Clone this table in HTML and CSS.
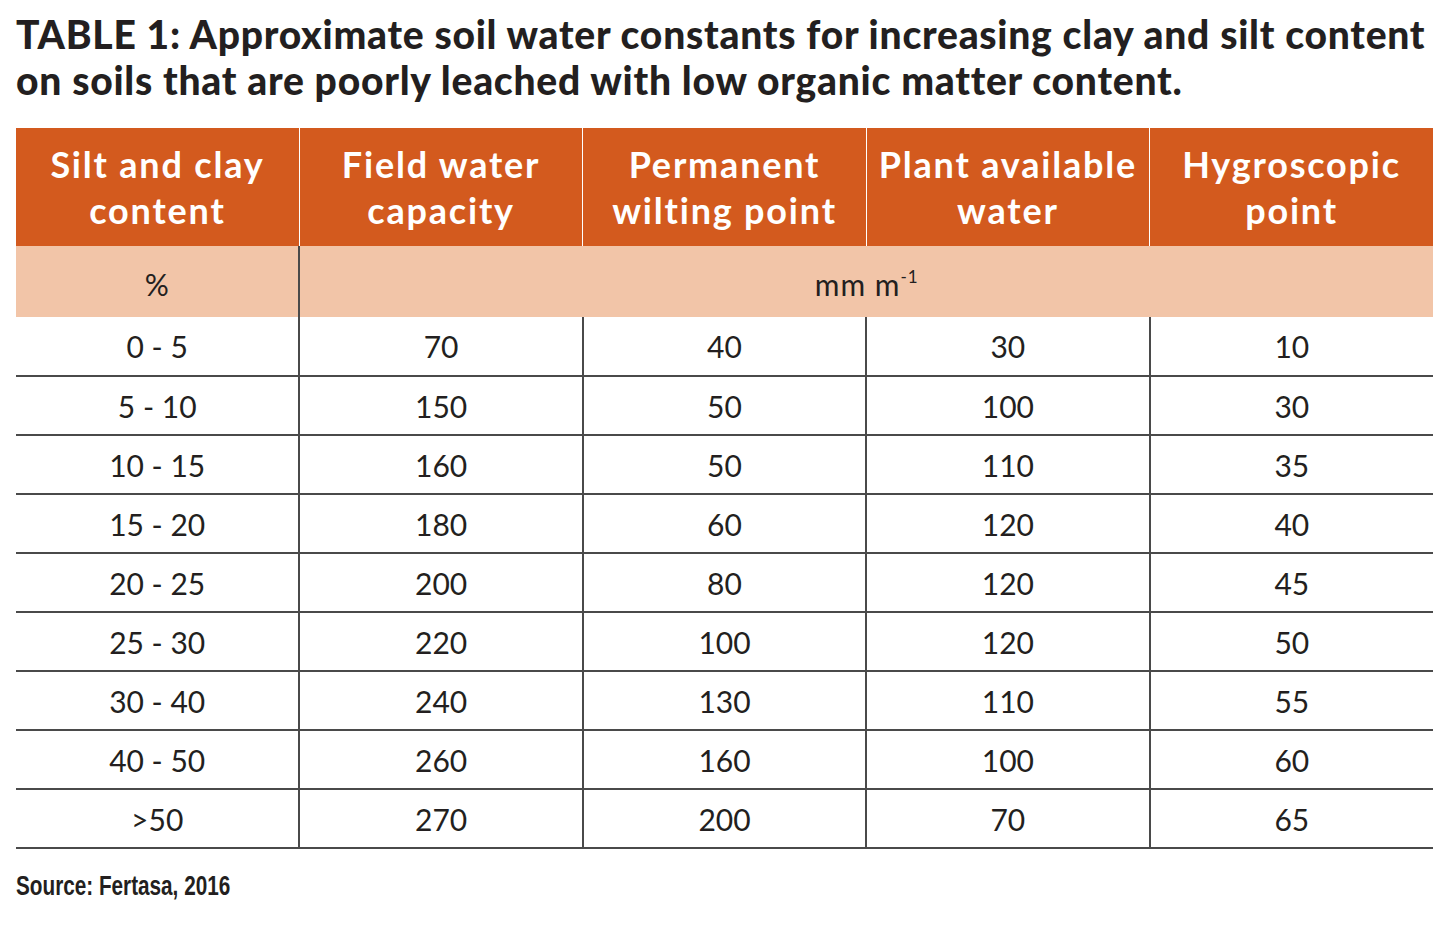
FILE: index.html
```html
<!DOCTYPE html>
<html lang="en">
<head>
<meta charset="utf-8">
<title>Table 1</title>
<link rel="stylesheet" href="styles.css">
</head>
<body>
<div class="page">
  <h1 class="title">TABLE 1: Approximate soil water constants for increasing clay and silt content<br>on soils that are poorly leached with low organic matter content.</h1>
  <table class="soil">
    <thead>
      <tr class="head">
        <th>Silt and clay<br>content</th>
        <th>Field water<br>capacity</th>
        <th>Permanent<br>wilting point</th>
        <th>Plant available<br>water</th>
        <th>Hygroscopic<br>point</th>
      </tr>
      <tr class="units">
        <td class="unit-first">%</td>
        <td colspan="4">mm m<sup>-1</sup></td>
      </tr>
    </thead>
    <tbody>
      <tr><td>0 - 5</td><td>70</td><td>40</td><td>30</td><td>10</td></tr>
      <tr><td>5 - 10</td><td>150</td><td>50</td><td>100</td><td>30</td></tr>
      <tr><td>10 - 15</td><td>160</td><td>50</td><td>110</td><td>35</td></tr>
      <tr><td>15 - 20</td><td>180</td><td>60</td><td>120</td><td>40</td></tr>
      <tr><td>20 - 25</td><td>200</td><td>80</td><td>120</td><td>45</td></tr>
      <tr><td>25 - 30</td><td>220</td><td>100</td><td>120</td><td>50</td></tr>
      <tr><td>30 - 40</td><td>240</td><td>130</td><td>110</td><td>55</td></tr>
      <tr><td>40 - 50</td><td>260</td><td>160</td><td>100</td><td>60</td></tr>
      <tr><td>&gt;50</td><td>270</td><td>200</td><td>70</td><td>65</td></tr>
    </tbody>
  </table>
  <p class="source"><span class="source-text">Source: Fertasa, 2016</span></p>
</div>
</body>
</html>
```

FILE: styles.css
```css
* { box-sizing: border-box; }
html, body { margin: 0; padding: 0; background: #ffffff; }
body { font-family: "Lato", "Open Sans", sans-serif; color: #231f20; }

.page { padding: 11px 22px 0 16px; }

.title {
  margin: 0;
  font-family: "Lato", sans-serif;
  font-weight: 900;
  font-size: 39px;
  line-height: 46px;
  letter-spacing: 0.75px;
  white-space: nowrap;
  color: #231f20;
}

.soil {
  margin-top: 25px;
  width: 1417px;
  border-collapse: collapse;
  table-layout: fixed;
}

.head th {
  background: #d35a1e;
  color: #ffffff;
  font-weight: 700;
  font-size: 36px;
  line-height: 46px;
  height: 118px;
  padding: 0;
  text-align: center;
  vertical-align: middle;
  border-left: 1px solid #ffffff;
  letter-spacing: 1.8px;
  white-space: nowrap;
}
.head th:first-child { border-left: none; }

.units td {
  background: #f2c5a8;
  height: 71px;
  font-size: 30px;
  text-align: center;
  vertical-align: middle;
  padding: 4px 0 0;
  letter-spacing: 1px;
}
.units .unit-first { border-right: 2px solid #4a4a4a; }
.units sup { font-size: 17px; vertical-align: 13px; line-height: 0; }

tbody td {
  height: 59px;
  font-size: 30px;
  text-align: center;
  vertical-align: middle;
  padding: 0;
  border-bottom: 2px solid #4a4a4a;
  border-left: 2px solid #4a4a4a;
}
tbody td:first-child { border-left: none; }

.source {
  margin: 21px 0 0;
  font-family: "Liberation Sans", sans-serif;
  font-weight: 700;
  font-size: 28px;
  line-height: 32px;
  color: #231f20;
}
.source-text {
  display: inline-block;
  transform: scaleX(0.74);
  transform-origin: left center;
  white-space: nowrap;
}
```
